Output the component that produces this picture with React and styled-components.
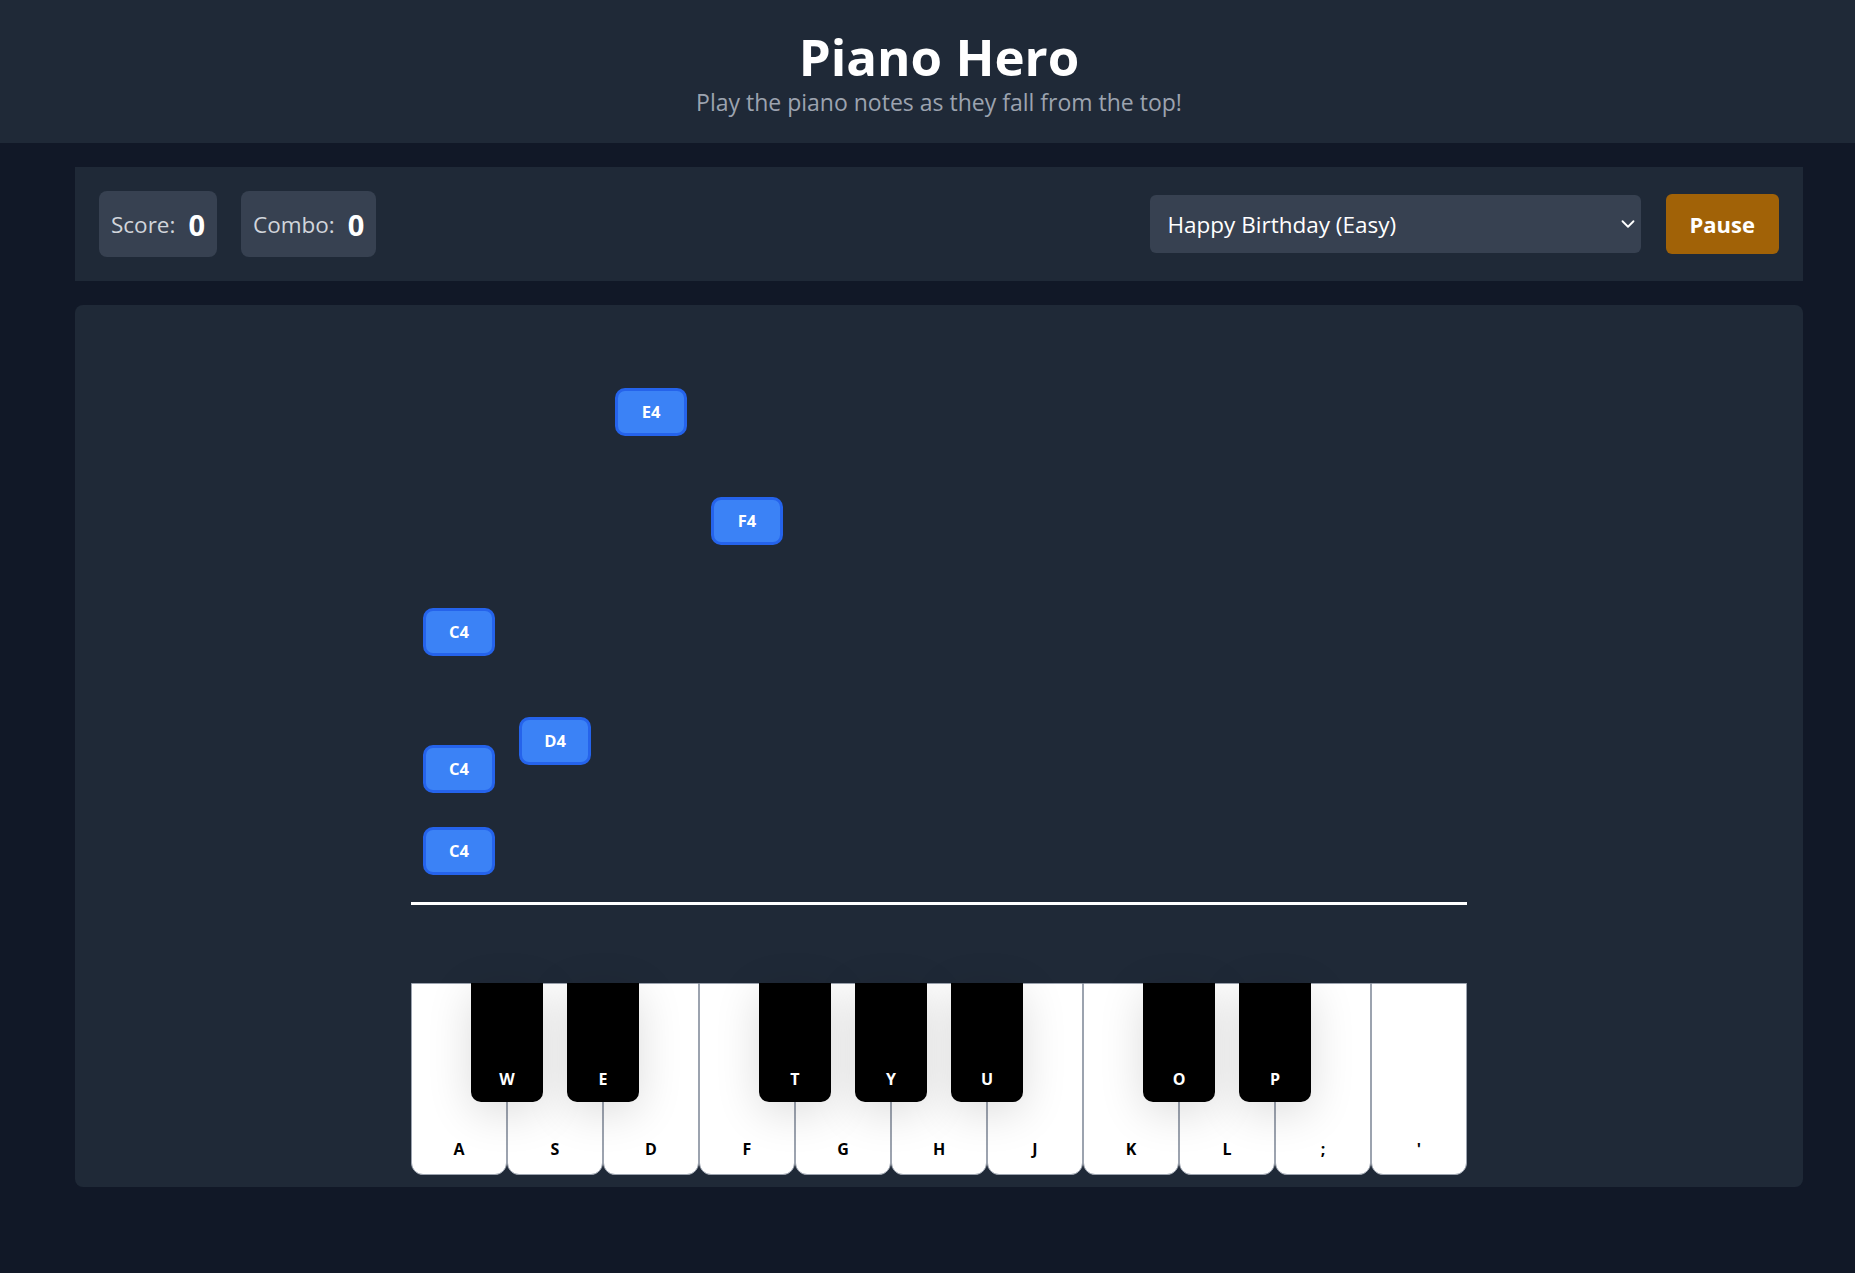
import React from "react";
import styled, { createGlobalStyle } from "styled-components";
import { ChevronDown } from "lucide-react";

const GlobalStyle = createGlobalStyle`
  * {
    box-sizing: border-box;
  }
  body {
    margin: 0;
    background: #111827;
    font-family: "Open Sans", "Noto Sans", sans-serif;
    color: #ffffff;
    min-height: 100vh;
  }
`;

const KEY_WIDTH = 96;

const WHITE_KEYS = ["A", "S", "D", "F", "G", "H", "J", "K", "L", ";", "'"];
// "after" = index of the white key boundary the black key sits on
const BLACK_KEYS = [
  { label: "W", after: 1 },
  { label: "E", after: 2 },
  { label: "T", after: 4 },
  { label: "Y", after: 5 },
  { label: "U", after: 6 },
  { label: "O", after: 8 },
  { label: "P", after: 9 },
];

const NOTES = [
  { name: "E4", key: 2, top: 83 },
  { name: "F4", key: 3, top: 192 },
  { name: "C4", key: 0, top: 303 },
  { name: "D4", key: 1, top: 412 },
  { name: "C4", key: 0, top: 440 },
  { name: "C4", key: 0, top: 522 },
];

const Header = styled.header`
  height: 143px;
  background: #1f2937;
  display: flex;
  flex-direction: column;
  align-items: center;
  padding: 26px 0 0 23px;
`;

const Title = styled.h1`
  margin: 0;
  font-size: 51px;
  line-height: 60px;
  font-weight: 700;
  color: #ffffff;
`;

const Subtitle = styled.p`
  margin: 0;
  font-size: 23px;
  line-height: 32px;
  color: #9ca3af;
`;

const MainWrap = styled.div`
  padding-left: 23px;
`;

const Main = styled.main`
  max-width: 1728px;
  margin: 0 auto;
  padding-top: 24px;
  display: flex;
  flex-direction: column;
  gap: 24px;
`;

const ControlsBar = styled.section`
  background: #1f2937;
  padding: 24px;
  display: flex;
  align-items: center;
  justify-content: space-between;
`;

const Stats = styled.div`
  display: flex;
  gap: 24px;
`;

const StatBox = styled.div`
  height: 66px;
  padding: 0 12px;
  border-radius: 8px;
  background: #374151;
  display: flex;
  align-items: center;
  gap: 13px;
`;

const StatLabel = styled.span`
  font-size: 22.5px;
  color: #d1d5db;
`;

const StatValue = styled.span`
  font-size: 29px;
  font-weight: 700;
  color: #ffffff;
`;

const Actions = styled.div`
  display: flex;
  align-items: center;
  gap: 25px;
`;

const SelectWrap = styled.div`
  position: relative;
  width: 491px;
  height: 58px;
`;

const SongSelect = styled.select`
  width: 100%;
  height: 100%;
  appearance: none;
  border: none;
  border-radius: 6px;
  background: #374151;
  color: #ffffff;
  font-family: inherit;
  font-size: 22.5px;
  padding: 0 40px 0 18px;
  outline: none;
`;

const SelectArrow = styled.span`
  position: absolute;
  right: 2px;
  top: 50%;
  transform: translateY(-50%);
  display: flex;
  color: #ffffff;
  pointer-events: none;
`;

const PauseButton = styled.button`
  height: 60px;
  padding: 0 24px;
  border: none;
  border-radius: 6px;
  background: #a16207;
  color: #ffffff;
  font-family: inherit;
  font-size: 22px;
  font-weight: 700;
`;

const GameArea = styled.section`
  background: #1f2937;
  border-radius: 8px;
  padding-bottom: 12px;
  display: flex;
  flex-direction: column;
  align-items: center;
`;

const Lane = styled.div`
  position: relative;
  width: ${KEY_WIDTH * 11}px;
  height: 600px;
  border-bottom: 3px solid #ffffff;
`;

const Note = styled.div`
  position: absolute;
  width: 72px;
  height: 48px;
  border: 3px solid #2563eb;
  border-radius: 10px;
  background: #3b82f6;
  color: #ffffff;
  font-size: 16.5px;
  font-weight: 700;
  display: flex;
  align-items: center;
  justify-content: center;
  padding-bottom: 1px;
`;

const Keyboard = styled.div`
  position: relative;
  margin-top: 78px;
  width: ${KEY_WIDTH * 11}px;
  height: 192px;
  display: flex;
`;

const WhiteKey = styled.div`
  width: ${KEY_WIDTH}px;
  height: 100%;
  background: #ffffff;
  border: 1px solid #9ca3af;
  border-radius: 0 0 12px 12px;
  display: flex;
  align-items: flex-end;
  justify-content: center;
  padding-bottom: 14px;
  color: #000000;
  font-size: 16px;
  font-weight: 700;
`;

const BlackKey = styled.div`
  position: absolute;
  top: 0;
  width: 72px;
  height: 119px;
  background: #000000;
  border-radius: 0 0 10px 10px;
  box-shadow: 0 10px 45px rgba(0, 0, 0, 0.14);
  display: flex;
  align-items: flex-end;
  justify-content: center;
  padding-bottom: 12px;
  color: #ffffff;
  font-size: 16px;
  font-weight: 700;
  z-index: 1;
`;

export default function App() {
  return (
    <>
      <GlobalStyle />
      <Header>
        <Title>Piano Hero</Title>
        <Subtitle>Play the piano notes as they fall from the top!</Subtitle>
      </Header>
      <MainWrap>
        <Main>
          <ControlsBar>
            <Stats>
              <StatBox>
                <StatLabel>Score:</StatLabel>
                <StatValue>0</StatValue>
              </StatBox>
              <StatBox>
                <StatLabel>Combo:</StatLabel>
                <StatValue>0</StatValue>
              </StatBox>
            </Stats>
            <Actions>
              <SelectWrap>
                <SongSelect defaultValue="happy">
                  <option value="happy">Happy Birthday (Easy)</option>
                  <option value="twinkle">Twinkle Twinkle (Easy)</option>
                </SongSelect>
                <SelectArrow>
                  <ChevronDown size={22} strokeWidth={2} />
                </SelectArrow>
              </SelectWrap>
              <PauseButton>Pause</PauseButton>
            </Actions>
          </ControlsBar>
          <GameArea>
            <Lane>
              {NOTES.map((n, i) => (
                <Note key={i} style={{ left: n.key * KEY_WIDTH + 12, top: n.top }}>
                  {n.name}
                </Note>
              ))}
            </Lane>
            <Keyboard>
              {WHITE_KEYS.map((k) => (
                <WhiteKey key={k}>{k}</WhiteKey>
              ))}
              {BLACK_KEYS.map((b) => (
                <BlackKey key={b.label} style={{ left: b.after * KEY_WIDTH - 36 }}>
                  {b.label}
                </BlackKey>
              ))}
            </Keyboard>
          </GameArea>
        </Main>
      </MainWrap>
    </>
  );
}
